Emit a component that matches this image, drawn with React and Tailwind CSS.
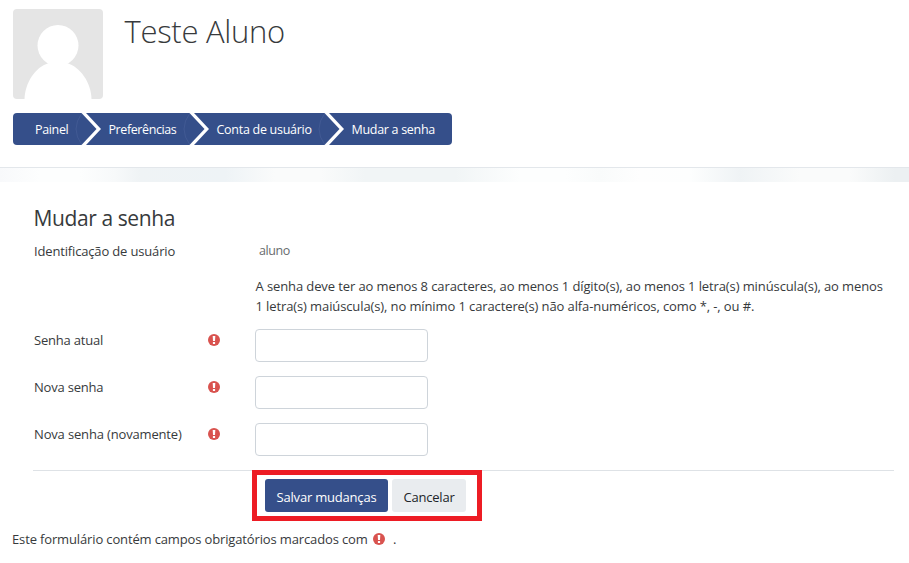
import React from "react";

function RequiredIcon() {
  return (
    <svg viewBox="0 0 12 12" className="block h-3 w-3 shrink-0" role="img" aria-label="Obrigatório">
      <circle cx="6" cy="6" r="6" fill="#d9534f" />
      <path d="M4.7 1.9h2.6L7 7H5z" fill="#fff" />
      <path d="M4.9 8h2.2v2H4.9z" fill="#fff" />
    </svg>
  );
}

function Separator() {
  return (
    <svg viewBox="0 0 20 32" className="block h-8 w-5 shrink-0 overflow-visible" aria-hidden="true">
      <path d="M1 0Q-11 16 1 32" fill="none" stroke="#4a629a" strokeWidth="0.6" />
      <path d="M0.5 0H5L20 16L5 32H0.5L15.5 16Z" fill="#fff" />
    </svg>
  );
}

function Breadcrumb() {
  return (
    <nav className="mt-3.5 ml-[13px] flex h-8 w-[439px] items-center overflow-hidden rounded bg-[#354f8a] text-[12.5px] whitespace-nowrap text-white">
      <span className="w-[68px] pt-[2px] pl-[22px] tracking-[-0.35px]">Painel</span>
      <Separator />
      <span className="w-[88px] pt-[2px] pl-[7.5px] tracking-[-0.4px]">Preferências</span>
      <Separator />
      <span className="w-[114.5px] pt-[2px] pl-[7.5px] tracking-[-0.28px]">Conta de usuário</span>
      <Separator />
      <span className="pt-[2px] pl-[8px] tracking-[-0.3px]">Mudar a senha</span>
    </nav>
  );
}

function Field({ label, tracking }) {
  return (
    <div className="flex h-[47px] items-start">
      <label className={"w-[174px] leading-5 whitespace-nowrap pt-px " + tracking}>{label}</label>
      <div className="w-[47px] pt-[5px]">
        <RequiredIcon />
      </div>
      <input type="password" className="h-[33px] w-[173px] rounded border border-[#ced4da] bg-white" />
    </div>
  );
}

export default function App() {
  return (
    <div className="h-[563px] w-[909px] overflow-hidden bg-white font-['Open_Sans','Noto_Sans',sans-serif] text-[13px] text-[#373a3c]">
      <header className="h-[168px] border-b border-[#e3e7eb] pt-[9px]">
        <div className="flex h-[90px]">
          <svg viewBox="0 0 90 90" className="ml-[13px] h-[90px] w-[90px] rounded bg-[#e5e5e5]" aria-hidden="true">
            <circle cx="45" cy="36.5" r="20.5" fill="#fff" />
            <path d="M11.5 90C12 74 22 58 36 54H54C67 58 78 73 78.5 90Z" fill="#fff" />
          </svg>
          <h1 className="ml-[21.5px] h-11 text-[31px] leading-[44px] font-light tracking-[-0.3px] whitespace-nowrap">Teste Aluno</h1>
        </div>
        <Breadcrumb />
      </header>
      <div className="h-3.5 bg-[linear-gradient(90deg,#f8f9fb_0px,#fdfefe_40px,#fdfefe_80px,#f7f9fa_115px,#eff3f5_140px,#eef3f6_225px,#fafbfb_275px,#fafbfb_320px,#f1f5f6_365px,#f1f5f6_455px,#fdfefe_520px,#fdfefe_565px,#f9fbfb_600px,#fefefe_640px,#fdfefe_690px,#eff3f5_740px,#fafbfb_800px,#fafbfb_850px,#ecf0f2_895px,#ecf0f2_909px)]" />
      <main className="pt-[21px] pl-[34px]">
        <h2 className="-ml-[0.5px] h-[30px] text-[21px] leading-[30px] tracking-[-0.4px] whitespace-nowrap">Mudar a senha</h2>
        <div className="mt-2 flex h-[35px] leading-5">
          <span className="w-[225px] tracking-[-0.16px] whitespace-nowrap">Identificação de usuário</span>
          <span className="text-[12.5px] tracking-[-0.4px] text-[#686b6e]">aluno</span>
        </div>
        <div className="ml-[221.5px] h-[53px] leading-5 whitespace-nowrap">
          <p className="tracking-[-0.105px]">A senha deve ter ao menos 8 caracteres, ao menos 1 dígito(s), ao menos 1 letra(s) minúscula(s), ao menos</p>
          <p className="tracking-[-0.11px]">1 letra(s) maiúscula(s), no mínimo 1 caractere(s) não alfa-numéricos, como *, -, ou #.</p>
        </div>
        <Field label="Senha atual" tracking="tracking-[-0.2px]" />
        <Field label="Nova senha" tracking="tracking-[-0.2px]" />
        <Field label="Nova senha (novamente)" tracking="tracking-[-0.16px]" />
        <hr className="-ml-px w-[861px] border-[#dee2e6]" />
      </main>
      <div className="-mt-px ml-[252px] flex h-[51px] w-[230px] gap-1 border-5 border-[#ed1c24] bg-white pt-1 pl-2">
        <button className="h-[33px] w-[123px] rounded-[3px] bg-[#354f8a] pt-[4px] tracking-[-0.2px] whitespace-nowrap text-white">Salvar mudanças</button>
        <button className="h-[33px] w-[74px] rounded-[3px] bg-[#e9ecef] pt-[4px] tracking-[-0.2px] whitespace-nowrap text-[#212529]">Cancelar</button>
      </div>
      <footer className="mt-2 ml-3 flex h-5 items-center leading-5 whitespace-nowrap">
        <span className="w-[361px] tracking-[-0.14px]">Este formulário contém campos obrigatórios marcados com</span>
        <RequiredIcon />
        <span className="ml-2">.</span>
      </footer>
    </div>
  );
}
